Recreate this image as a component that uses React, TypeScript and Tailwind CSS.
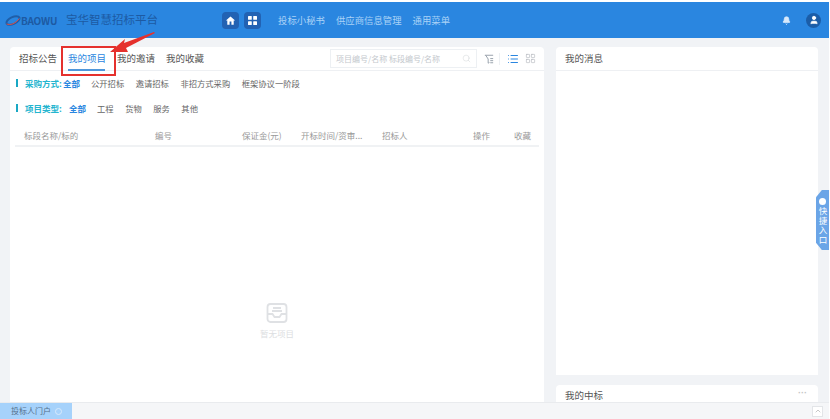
import { Bell, ChevronUp, LayoutGrid, List, Search, User } from 'lucide-react';

const font = "font-['Noto_Sans_CJK_SC','Liberation_Sans',sans-serif]";

const columns = [
  { label: '标段名称/标的', width: 'w-[131px]' },
  { label: '编号', width: 'w-[87px]' },
  { label: '保证金(元)', width: 'w-[59px]' },
  { label: '开标时间/资审...', width: 'w-[81px]' },
  { label: '招标人', width: 'w-[91px]' },
  { label: '操作', width: 'w-[41px]' },
  { label: '收藏', width: 'w-[20px]' },
];

function FilterRow({ label, items, activeGap }: { label: string; items: string[]; activeGap: string }) {
  return (
    <div className="flex h-3 items-center">
      <span className="mr-[7px] h-2 w-0.5 bg-[#19a8c4]" />
      <span className="w-[36px] whitespace-nowrap text-[8.5px] font-bold text-[#25b5cf]">{label}</span>
      <span className={`text-[8.5px] font-bold text-[#2a86e0] ${activeGap}`}>全部</span>
      <div className="flex gap-[11.5px]">
        {items.map((item) => (
          <span key={item} className="text-[8.3px] text-[#666]">{item}</span>
        ))}
      </div>
    </div>
  );
}

export default function App() {
  return (
    <div className={`relative flex h-[419px] w-[829px] flex-col overflow-hidden bg-[#f1f3f6] ${font}`}>
      <div className="h-0.5 shrink-0 bg-white" />
      <header className="flex h-9 shrink-0 items-center bg-[#2a86e0] pl-[5px] pr-[8px]">
        <svg viewBox="0 0 16 12" className="h-[13px] w-[16px]">
          <ellipse cx="8" cy="6" rx="7" ry="3.4" transform="rotate(-25 8 6)" fill="none" stroke="#1f5ea8" strokeWidth="2" />
          <path d="M1.5 9.5 Q8 12 14.5 4" fill="none" stroke="#d8504a" strokeWidth="1" />
        </svg>
        <span className="w-[37px] text-[10px] font-bold tracking-tight text-[#1d5aa3]">BAOWU</span>
        <span className="ml-[8px] w-[93px] whitespace-nowrap text-[11.5px] text-[#1d5aa3]">宝华智慧招标平台</span>
        <div className="ml-[63px] flex gap-[5px]">
          <div className="flex h-[17px] w-[17px] items-center justify-center rounded-sm bg-[#2262b3]">
            <svg viewBox="0 0 24 24" className="h-[11px] w-[11px]" fill="white">
              <path d="M10 21v-7h4v7h5v-9h3L12 3 2 12h3v9z" />
            </svg>
          </div>
          <div className="flex h-[17px] w-[17px] items-center justify-center rounded-sm bg-[#2262b3]">
            <svg viewBox="0 0 10 10" className="h-[9px] w-[9px]" fill="white">
              <rect width="4.2" height="4.2" rx="0.6" />
              <rect x="5.8" width="4.2" height="4.2" rx="0.6" />
              <rect y="5.8" width="4.2" height="4.2" rx="0.6" />
              <rect x="5.8" y="5.8" width="4.2" height="4.2" rx="0.6" />
            </svg>
          </div>
        </div>
        <nav className="ml-[17px] flex gap-[11px] text-[9.4px] text-[#a9d2f7]">
          <span>投标小秘书</span>
          <span>供应商信息管理</span>
          <span>通用菜单</span>
        </nav>
        <div className="ml-auto flex items-center gap-[15px]">
          <Bell size={9} fill="#d8e9fb" stroke="#d8e9fb" />
          <div className="flex h-[15px] w-[15px] items-center justify-center rounded-full bg-[#1b5da8]">
            <User size={10} fill="white" stroke="white" />
          </div>
        </div>
      </header>

      <main className="flex min-h-0 flex-1 gap-3 pl-2.5 pr-[11px] pt-[9px]">
        <section className="flex w-[534px] flex-col rounded-t-sm bg-white">
          <div className="flex h-6 shrink-0 items-center border-b border-[#eef0f3] pl-[9px] pr-2">
            <div className="flex gap-[11px] text-[9.5px] text-[#555]">
              <span>招标公告</span>
              <span className="text-[#2a86e0]">我的项目</span>
              <span>我的邀请</span>
              <span>我的收藏</span>
            </div>
            <div className="ml-auto flex h-[19px] w-[147px] items-center justify-between border border-[#edf0f3] px-[5px] text-[8px] text-[#c4c8cd]">
              <span>项目编号/名称 标段编号/名称</span>
              <Search size={9} strokeWidth={1} />
            </div>
            <svg viewBox="0 0 12 12" className="ml-[7px] h-[10px] w-[10px]" fill="none" stroke="#9aa3ad" strokeWidth="1.2">
              <path d="M1 1.5h10M2 1.5l3 4.5v5l1.5-.8" />
              <path d="M7.5 5.5H11M7.5 8H11M7.5 10.5H11" />
            </svg>
            <span className="ml-[5px] h-3 w-px bg-[#edf0f3]" />
            <List size={12} className="ml-[7px] text-[#2a86e0]" />
            <LayoutGrid size={11} strokeWidth={1.2} className="ml-[6px] text-[#a8adb3]" />
          </div>
          <div className="flex flex-col gap-[13px] pl-1.5 pt-[6px]">
            <FilterRow label="采购方式:" items={['公开招标', '邀请招标', '非招方式采购', '框架协议一阶段']} activeGap="ml-[2px] mr-[11px]" />
            <FilterRow label="项目类型:" items={['工程', '货物', '服务', '其他']} activeGap="ml-[8px] mr-[11px]" />
          </div>
          <div className="mx-[5px] mt-[11px] flex h-[22px] shrink-0 items-center border-b-2 border-[#f0f2f4] pl-[9px] text-[8.5px] text-[#999]">
            {columns.map((col) => (
              <span key={col.label} className={`shrink-0 whitespace-nowrap ${col.width}`}>{col.label}</span>
            ))}
          </div>
          <div className="flex flex-1 flex-col items-center justify-end pb-[62px]">
            <svg viewBox="0 0 24 24" className="h-[24px] w-[24px]" fill="none" stroke="#dfe1e4" strokeWidth="1.8">
              <rect x="2.5" y="3" width="19" height="18" rx="3" />
              <path d="M2.5 13h5l2 3h5l2-3h5" />
              <path d="M8 7h8M7 10h10" />
            </svg>
            <span className="mt-0.5 text-[8.5px] text-[#dcdee1]">暂无项目</span>
          </div>
        </section>

        <aside className="flex w-[262px] flex-col gap-2.5">
          <section className="flex-1 rounded-t-sm bg-white">
            <div className="flex h-6 items-center border-b border-[#eef0f3] pl-[9px] text-[9.5px] text-[#555]">我的消息</div>
          </section>
          <section className="flex h-[17px] shrink-0 items-start justify-between rounded-t-sm bg-white pl-[9px] pr-[11px] pt-[3px] text-[9.5px] leading-[14px] text-[#555]">
            <span>我的中标</span>
            <span className="font-['Liberation_Sans'] text-[9px] font-bold leading-[10px] text-[#c4c4c4]">···</span>
          </section>
        </aside>
      </main>

      <footer className="flex h-[17px] shrink-0 items-center justify-between border-t border-[#e9ebee] bg-[#f5f6f8] pr-1.5">
        <div className="flex h-full w-[72px] items-center gap-1 bg-[#a6d2fb] pl-[11px] text-[8px] text-[#55708c]">
          <span>投标人门户</span>
          <span className="h-[7px] w-[7px] rounded-full border border-[#d8eafc]" />
        </div>
        <div className="flex h-[11px] w-[11px] items-center justify-center border border-[#e3e5e8] bg-white">
          <ChevronUp size={8} className="text-[#aaa]" />
        </div>
      </footer>

      {/* annotations painted over the screenshot */}
      <div className="absolute left-[61px] top-[46px] h-[30px] w-[55px] border-2 border-[#e5312d]">
        <span className="absolute bottom-[3px] left-[5px] h-0.5 w-[37px] bg-[#4f97db]" />
      </div>
      <svg viewBox="0 0 60 30" className="absolute left-[105px] top-[30px] h-[30px] w-[60px]">
        <path d="M49 2 L19 13 L20 9 L5 22 L23 22 L21 18 L50 3 Z" fill="#e5312d" />
      </svg>

      {/* quick entry tab */}
      <div className="absolute right-0 top-[190px] flex h-[60px] w-[13px] flex-col items-center bg-[#6ba5e7] pt-[8px] text-white [clip-path:polygon(100%_0,45%_0,0_12%,0_88%,45%_100%,100%_100%)]">
        <span className="mb-[2px] h-[7px] w-[7px] shrink-0 rounded-full bg-white" />
        <span className="text-[8.5px] leading-[13px] tracking-[1px] [text-orientation:upright] [writing-mode:vertical-rl]">快捷入口</span>
      </div>
    </div>
  );
}
